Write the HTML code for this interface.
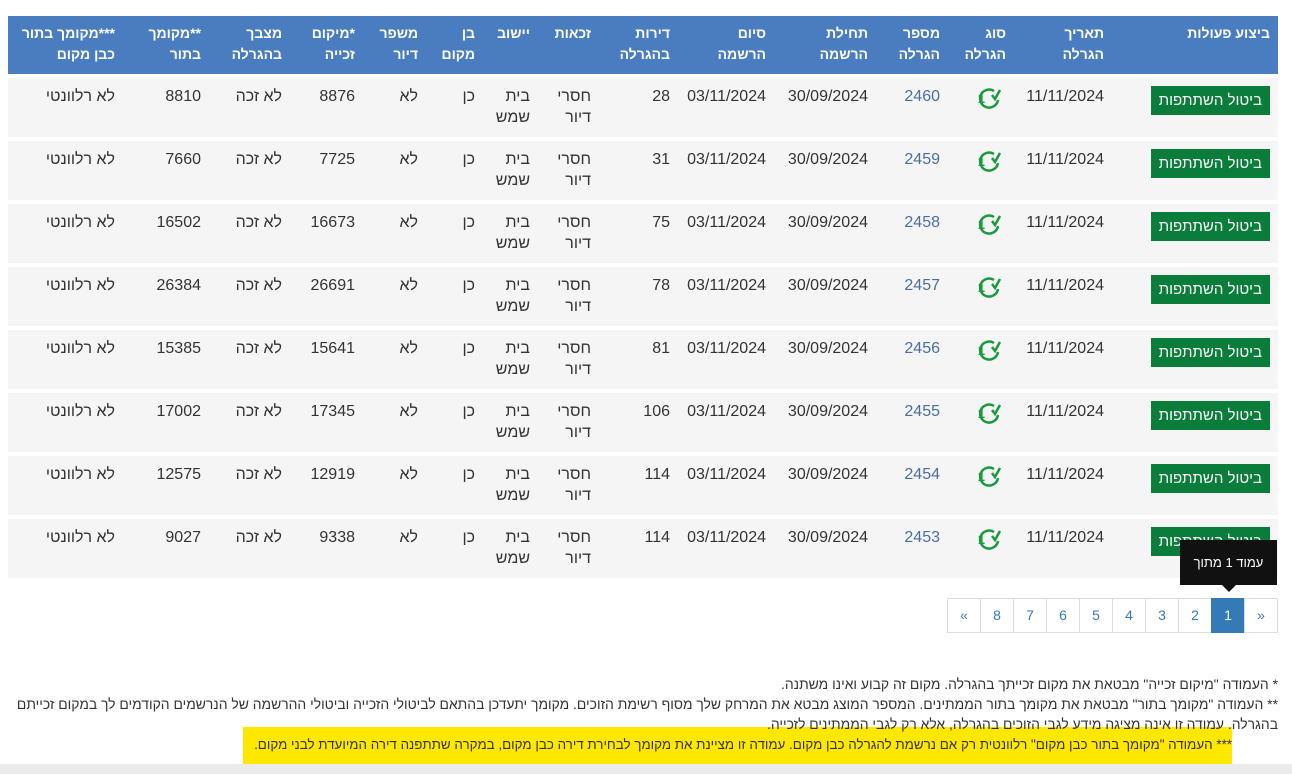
<!DOCTYPE html>
<html dir="rtl"><head><meta charset="utf-8"><style>
body{margin:0;width:1292px;height:774px;background:#fff;font-family:"Liberation Sans","Noto Sans CJK JP",sans-serif;position:relative;overflow:hidden;color:#333}
table{position:absolute;left:8px;top:12px;width:1270px;border-collapse:separate;border-spacing:0 4px;table-layout:fixed;font-size:14px}
th{background:#4a7dc0;color:#fff;font-weight:bold;text-align:right;vertical-align:top;padding:7px 8px 0 8px;height:51px;line-height:21px}
td{background:#f5f5f5;vertical-align:top;text-align:right;padding:8px 8px 0 8px;height:51px;line-height:21px;color:#333;font-size:16px}
td.n{color:#4a6f9f}
.btn{display:inline-block;background:#0a7d3a;color:#fff;padding:0 8px;height:29px;line-height:29px;font-size:15px}
.pg{position:absolute;top:598px;left:948px;display:flex;direction:ltr}
.pg div{width:32px;height:33px;border:1px solid #ddd;margin-left:-1px;text-align:center;line-height:33px;color:#337ab7;font-size:14px;direction:ltr}
.pg div.a{background:#337ab7;color:#fff;border-color:#337ab7}
.tip{position:absolute;left:1180px;top:540px;width:97px;height:45px;background:#111;color:#fff;font-size:13px;text-align:center;line-height:45px}
.tip:after{content:"";position:absolute;left:42px;bottom:-7px;border:7px solid transparent;border-bottom:0;border-top-color:#111}
.notes{position:absolute;right:14px;top:674px;font-size:13.9px;line-height:20px;color:#333;text-align:right;white-space:nowrap}
.l4{position:absolute;right:60px;top:735px;font-size:13.4px;line-height:20px;color:#333;white-space:nowrap}
.hl{position:absolute;left:243px;top:727px;width:989px;height:41px;background:#ffe800}
.bar{position:absolute;left:0;top:764px;width:1292px;height:10px;background:#ebebeb}
</style></head><body>
<div class="hl"></div>
<table>
<colgroup><col style="width:166px"><col style="width:98px"><col style="width:66px"><col style="width:72px"><col style="width:102px"><col style="width:96px"><col style="width:79px"><col style="width:61px"><col style="width:55px"><col style="width:57px"><col style="width:63px"><col style="width:73px"><col style="width:81px"><col style="width:86px"><col style="width:115px"></colgroup>
<tr><th>ביצוע פעולות</th><th>תאריך הגרלה</th><th>סוג הגרלה</th><th>מספר הגרלה</th><th>תחילת הרשמה</th><th>סיום הרשמה</th><th>דירות בהגרלה</th><th>זכאות</th><th>יישוב</th><th>בן מקום</th><th>משפר דיור</th><th>*מיקום זכייה</th><th>מצבך בהגרלה</th><th>**מקומך בתור</th><th>***מקומך בתור כבן מקום</th></tr>
<tr><td><span class="btn">ביטול השתתפות</span></td><td>11/11/2024</td><td><svg width="24" height="24" viewBox="0 0 24 24" style="margin-right:4px"><path d="M16 5A9 9 0 1 0 20 14" fill="none" stroke="#1a9a3e" stroke-width="2.5"/><path d="M14 9l3 4 5-9" fill="none" stroke="#1a9a3e" stroke-width="2.5"/><text x="7" y="17" font-size="13" font-weight="bold" fill="#1a9a3e" font-family="Liberation Sans">1</text></svg></td><td class="n">2460</td><td>30/09/2024</td><td>03/11/2024</td><td>28</td><td>חסרי דיור</td><td>בית שמש</td><td>כן</td><td>לא</td><td>8876</td><td>לא זכה</td><td>8810</td><td>לא רלוונטי</td></tr>
<tr><td><span class="btn">ביטול השתתפות</span></td><td>11/11/2024</td><td><svg width="24" height="24" viewBox="0 0 24 24" style="margin-right:4px"><path d="M16 5A9 9 0 1 0 20 14" fill="none" stroke="#1a9a3e" stroke-width="2.5"/><path d="M14 9l3 4 5-9" fill="none" stroke="#1a9a3e" stroke-width="2.5"/><text x="7" y="17" font-size="13" font-weight="bold" fill="#1a9a3e" font-family="Liberation Sans">1</text></svg></td><td class="n">2459</td><td>30/09/2024</td><td>03/11/2024</td><td>31</td><td>חסרי דיור</td><td>בית שמש</td><td>כן</td><td>לא</td><td>7725</td><td>לא זכה</td><td>7660</td><td>לא רלוונטי</td></tr>
<tr><td><span class="btn">ביטול השתתפות</span></td><td>11/11/2024</td><td><svg width="24" height="24" viewBox="0 0 24 24" style="margin-right:4px"><path d="M16 5A9 9 0 1 0 20 14" fill="none" stroke="#1a9a3e" stroke-width="2.5"/><path d="M14 9l3 4 5-9" fill="none" stroke="#1a9a3e" stroke-width="2.5"/><text x="7" y="17" font-size="13" font-weight="bold" fill="#1a9a3e" font-family="Liberation Sans">1</text></svg></td><td class="n">2458</td><td>30/09/2024</td><td>03/11/2024</td><td>75</td><td>חסרי דיור</td><td>בית שמש</td><td>כן</td><td>לא</td><td>16673</td><td>לא זכה</td><td>16502</td><td>לא רלוונטי</td></tr>
<tr><td><span class="btn">ביטול השתתפות</span></td><td>11/11/2024</td><td><svg width="24" height="24" viewBox="0 0 24 24" style="margin-right:4px"><path d="M16 5A9 9 0 1 0 20 14" fill="none" stroke="#1a9a3e" stroke-width="2.5"/><path d="M14 9l3 4 5-9" fill="none" stroke="#1a9a3e" stroke-width="2.5"/><text x="7" y="17" font-size="13" font-weight="bold" fill="#1a9a3e" font-family="Liberation Sans">1</text></svg></td><td class="n">2457</td><td>30/09/2024</td><td>03/11/2024</td><td>78</td><td>חסרי דיור</td><td>בית שמש</td><td>כן</td><td>לא</td><td>26691</td><td>לא זכה</td><td>26384</td><td>לא רלוונטי</td></tr>
<tr><td><span class="btn">ביטול השתתפות</span></td><td>11/11/2024</td><td><svg width="24" height="24" viewBox="0 0 24 24" style="margin-right:4px"><path d="M16 5A9 9 0 1 0 20 14" fill="none" stroke="#1a9a3e" stroke-width="2.5"/><path d="M14 9l3 4 5-9" fill="none" stroke="#1a9a3e" stroke-width="2.5"/><text x="7" y="17" font-size="13" font-weight="bold" fill="#1a9a3e" font-family="Liberation Sans">1</text></svg></td><td class="n">2456</td><td>30/09/2024</td><td>03/11/2024</td><td>81</td><td>חסרי דיור</td><td>בית שמש</td><td>כן</td><td>לא</td><td>15641</td><td>לא זכה</td><td>15385</td><td>לא רלוונטי</td></tr>
<tr><td><span class="btn">ביטול השתתפות</span></td><td>11/11/2024</td><td><svg width="24" height="24" viewBox="0 0 24 24" style="margin-right:4px"><path d="M16 5A9 9 0 1 0 20 14" fill="none" stroke="#1a9a3e" stroke-width="2.5"/><path d="M14 9l3 4 5-9" fill="none" stroke="#1a9a3e" stroke-width="2.5"/><text x="7" y="17" font-size="13" font-weight="bold" fill="#1a9a3e" font-family="Liberation Sans">1</text></svg></td><td class="n">2455</td><td>30/09/2024</td><td>03/11/2024</td><td>106</td><td>חסרי דיור</td><td>בית שמש</td><td>כן</td><td>לא</td><td>17345</td><td>לא זכה</td><td>17002</td><td>לא רלוונטי</td></tr>
<tr><td><span class="btn">ביטול השתתפות</span></td><td>11/11/2024</td><td><svg width="24" height="24" viewBox="0 0 24 24" style="margin-right:4px"><path d="M16 5A9 9 0 1 0 20 14" fill="none" stroke="#1a9a3e" stroke-width="2.5"/><path d="M14 9l3 4 5-9" fill="none" stroke="#1a9a3e" stroke-width="2.5"/><text x="7" y="17" font-size="13" font-weight="bold" fill="#1a9a3e" font-family="Liberation Sans">1</text></svg></td><td class="n">2454</td><td>30/09/2024</td><td>03/11/2024</td><td>114</td><td>חסרי דיור</td><td>בית שמש</td><td>כן</td><td>לא</td><td>12919</td><td>לא זכה</td><td>12575</td><td>לא רלוונטי</td></tr>
<tr><td><span class="btn">ביטול השתתפות</span></td><td>11/11/2024</td><td><svg width="24" height="24" viewBox="0 0 24 24" style="margin-right:4px"><path d="M16 5A9 9 0 1 0 20 14" fill="none" stroke="#1a9a3e" stroke-width="2.5"/><path d="M14 9l3 4 5-9" fill="none" stroke="#1a9a3e" stroke-width="2.5"/><text x="7" y="17" font-size="13" font-weight="bold" fill="#1a9a3e" font-family="Liberation Sans">1</text></svg></td><td class="n">2453</td><td>30/09/2024</td><td>03/11/2024</td><td>114</td><td>חסרי דיור</td><td>בית שמש</td><td>כן</td><td>לא</td><td>9338</td><td>לא זכה</td><td>9027</td><td>לא רלוונטי</td></tr>
</table>
<div class="tip">עמוד 1 מתוך</div>
<div class="pg"><div>«</div><div>8</div><div>7</div><div>6</div><div>5</div><div>4</div><div>3</div><div>2</div><div class="a">1</div><div>»</div></div>
<div class="notes">* העמודה "מיקום זכייה" מבטאת את מקום זכייתך בהגרלה. מקום זה קבוע ואינו משתנה.<br>** העמודה "מקומך בתור" מבטאת את מקומך בתור הממתינים. המספר המוצג מבטא את המרחק שלך מסוף רשימת הזוכים. מקומך יתעדכן בהתאם לביטולי הזכייה וביטולי ההרשמה של הנרשמים הקודמים לך במקום זכייתם<br>בהגרלה. עמודה זו אינה מציגה מידע לגבי הזוכים בהגרלה, אלא רק לגבי הממתינים לזכייה.</div>
<div class="l4">*** העמודה "מקומך בתור כבן מקום" רלוונטית רק אם נרשמת להגרלה כבן מקום. עמודה זו מציינת את מקומך לבחירת דירה כבן מקום, במקרה שתתפנה דירה המיועדת לבני מקום.</div>
<div class="bar"></div>
</body></html>
